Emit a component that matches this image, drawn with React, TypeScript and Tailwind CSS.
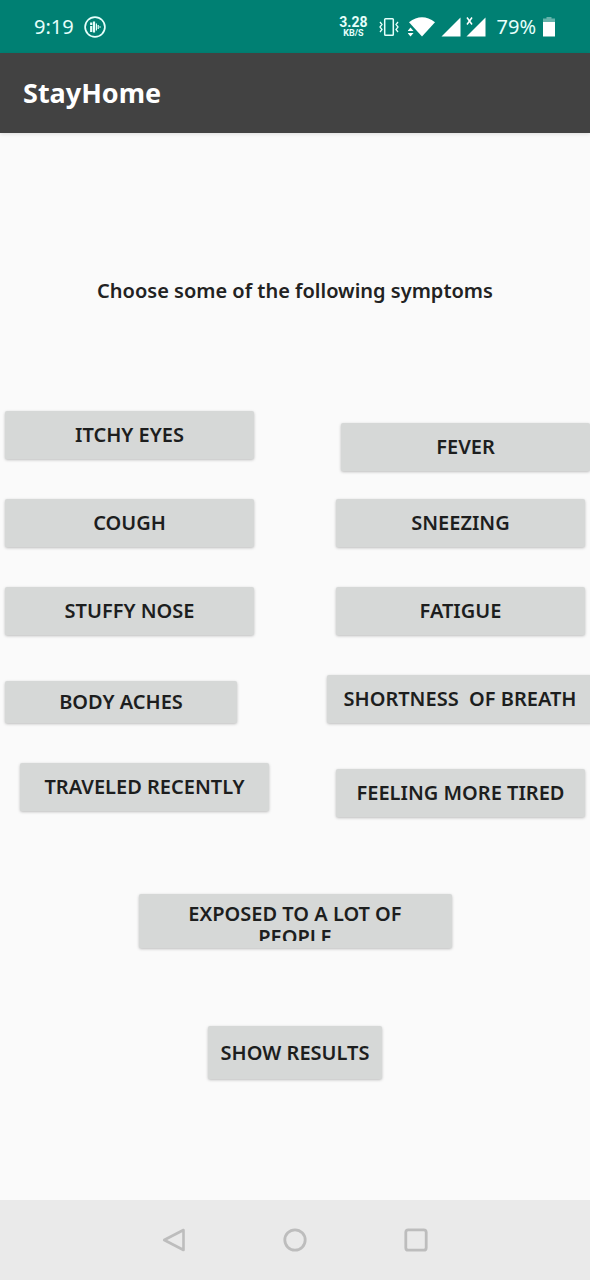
import { clsx } from 'clsx';

type ActionProps = { label: string; className?: string };

function ActionButton({ label, className }: ActionProps) {
  return (
    <button
      type="button"
      className={clsx(
        'flex shrink-0 items-center justify-center rounded-[2px] bg-[#d6d8d7] text-xl leading-6 font-semibold whitespace-pre text-[#1d1e1e] shadow-[0_1px_3px_rgba(0,0,0,0.25)]',
        className,
      )}
    >
      {label}
    </button>
  );
}

const leftSymptoms: ActionProps[] = [
  { label: 'ITCHY EYES', className: 'h-12 w-[249px]' },
  { label: 'COUGH', className: 'mt-10 h-12 w-[249px]' },
  { label: 'STUFFY NOSE', className: 'mt-10 h-12 w-[249px]' },
  { label: 'BODY ACHES', className: 'mt-[46px] h-[42px] w-[232px]' },
  { label: 'TRAVELED RECENTLY', className: 'mt-10 ml-[15px] h-12 w-[249px]' },
];

const rightSymptoms: ActionProps[] = [
  { label: 'FEVER', className: 'mt-3 h-12 w-[249px]' },
  { label: 'SNEEZING', className: 'mt-7 mr-[5px] h-12 w-[249px]' },
  { label: 'FATIGUE', className: 'mt-10 mr-[5px] h-12 w-[249px]' },
  { label: 'SHORTNESS  OF BREATH', className: 'mt-10 -mr-[3px] h-12 w-[266px]' },
  { label: 'FEELING MORE TIRED', className: 'mt-[46px] mr-[5px] h-12 w-[249px]' },
];

function StatusBar() {
  return (
    <div className="flex h-[53px] items-center justify-between bg-[#008073] pr-[35px] pl-[34px] text-[#e6fffb]">
      <div className="flex items-center gap-[10px]">
        <span className="text-xl leading-6">9:19</span>
        <svg width="22" height="22" viewBox="0 0 22 22" fill="none" stroke="currentColor" aria-hidden="true">
          <circle cx="11" cy="11" r="9.9" strokeWidth="1.7" />
          <path d="M7.2 6.5v2.500M7.200 10v6" strokeWidth="2.200" />
          <path d="M10 5.500v11" strokeWidth="2.200" />
          <path d="M12.400 7.500v7" strokeWidth="1.200" />
          <path d="M14.200 9v4M16 10.300v1.500" strokeWidth="1.200" />
        </svg>
      </div>
      <div className="flex items-center">
        <div className="flex flex-col items-center font-['Roboto',sans-serif] font-bold">
          <span className="text-sm leading-[14px]">3.28</span>
          <span className="text-[9px] leading-[9px]">KB/S</span>
        </div>
        <svg className="ml-[11px]" width="20" height="20" viewBox="0 0 20 20" fill="none" stroke="currentColor" aria-hidden="true">
          <rect x="5.700" y="1.700" width="8.600" height="16.600" rx="0.800" strokeWidth="1.500" />
          <path d="M1 5l2 2.500-2 2.500 2 2.500-2 2.500M19 5l-2 2.500 2 2.500-2 2.500 2 2.500" strokeWidth="1.300" />
        </svg>
        <svg className="ml-[9px]" width="28" height="20" viewBox="0 0 28 20" fill="#fff" aria-hidden="true">
          <path d="M1 5.200Q14 -4.500 27 5.200L14 19.500Z" />
          <path d="M-0.500 14L2.500 10.500L5.500 14zM-0.500 16H5.500L2.500 19.500z" />
        </svg>
        <svg className="ml-[5px]" width="20" height="20" viewBox="0 0 20 20" fill="#fff" aria-hidden="true">
          <path d="M19.500 0.500V19.500H0.500Z" />
        </svg>
        <svg className="ml-[5px]" width="20" height="20" viewBox="0 0 20 20" fill="#fff" aria-hidden="true">
          <path d="M19.500 0.500V19.500H0.500Z" />
          <path d="M1 0.500l5 7M6 0.500l-5 7" stroke="#fff" strokeWidth="1.500" />
        </svg>
        <span className="ml-[11px] text-xl leading-6">79%</span>
        <svg className="ml-[7px]" width="12" height="20" viewBox="0 0 12 20" aria-hidden="true">
          <path d="M3.500 0h5v1.500H12V5H0V1.500h3.500z" fill="#66b3ab" />
          <path d="M0 5h12v14.500H0z" fill="#fff" />
        </svg>
      </div>
    </div>
  );
}

function NavigationBar() {
  return (
    <nav className="flex h-20 items-center justify-center gap-[97px] bg-[#eaeaea] text-[#bdbdbd]">
      <button type="button" aria-label="Back">
        <svg width="24" height="24" viewBox="0 0 24 24" fill="none" stroke="currentColor" strokeWidth="2.600" strokeLinejoin="round">
          <path d="M21.500 2V22L2.200 12Z" />
        </svg>
      </button>
      <button type="button" aria-label="Home">
        <svg width="24" height="24" viewBox="0 0 24 24" fill="none" stroke="currentColor" strokeWidth="2.800">
          <circle cx="12" cy="12" r="10.200" />
        </svg>
      </button>
      <button type="button" aria-label="Recent apps">
        <svg width="24" height="24" viewBox="0 0 24 24" fill="none" stroke="currentColor" strokeWidth="2.800">
          <rect x="1.800" y="1.800" width="20.400" height="20.400" rx="2.500" />
        </svg>
      </button>
    </nav>
  );
}

export default function App() {
  return (
    <div className="flex min-h-screen flex-col overflow-x-hidden bg-[#fafafa] font-['Noto_Sans',sans-serif]">
      <StatusBar />
      <header className="flex h-20 items-center bg-[#424242] px-[23px] shadow-[0_1px_4px_rgba(0,0,0,0.12)]">
        <h1 className="text-[27px] leading-9 font-bold text-white">StayHome</h1>
      </header>
      <main className="flex flex-1 flex-col items-center pt-[146px] pb-10">
        <h2 className="text-xl leading-6 font-semibold text-[#222]">Choose some of the following symptoms</h2>
        <div className="mt-[108px] flex w-full justify-between">
          <div className="flex flex-col items-start pl-[5px]">
            {leftSymptoms.map((s) => (
              <ActionButton key={s.label} {...s} />
            ))}
          </div>
          <div className="flex flex-col items-end">
            {rightSymptoms.map((s) => (
              <ActionButton key={s.label} {...s} />
            ))}
          </div>
        </div>
        <button
          type="button"
          className="mt-[77px] h-[54px] w-[313px] rounded-[2px] bg-[#d6d8d7] px-10 py-[7px] text-xl leading-[23px] font-semibold text-[#1d1e1e] shadow-[0_1px_3px_rgba(0,0,0,0.25)]"
        >
          <span className="block h-10 overflow-hidden pt-px">EXPOSED TO A LOT OF PEOPLE</span>
        </button>
        <ActionButton label="SHOW RESULTS" className="mt-[78px] h-[53px] w-[174px]" />
      </main>
      <NavigationBar />
    </div>
  );
}
